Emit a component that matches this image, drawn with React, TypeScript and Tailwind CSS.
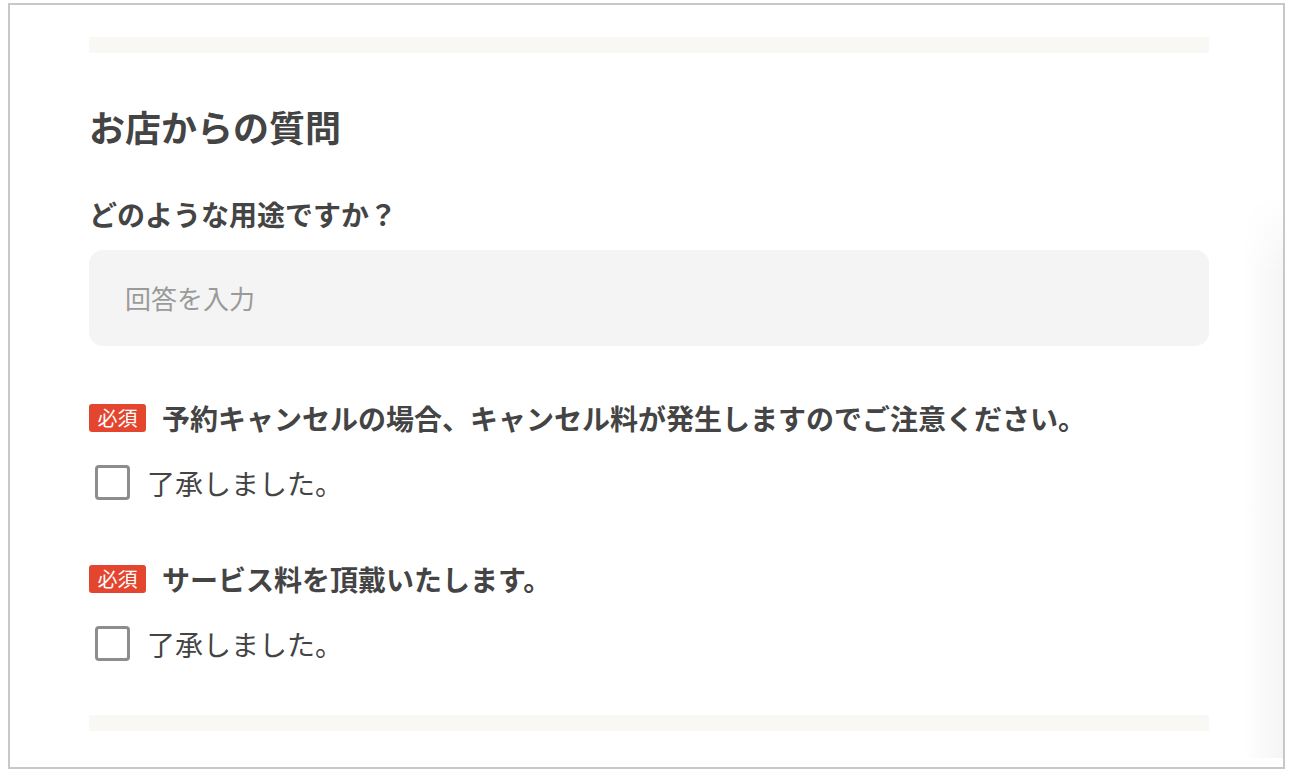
import React from "react";

const font = { fontFamily: '"Noto Sans CJK JP", "Noto Sans", sans-serif' };

function Required({ text, mt }: { text: string; mt: string }) {
  return (
    <div className={`flex items-center h-[28px] gap-[16px] ${mt}`}>
      <span className="flex items-center justify-center h-[28px] w-[57px] rounded-[3px] bg-[#e4452f] text-white text-[20px] leading-none">
        必須
      </span>
      <span className="text-[28px] font-bold leading-none text-[#444444]">{text}</span>
    </div>
  );
}

function Check({ mt }: { mt: string }) {
  return (
    <label className={`flex items-center h-[35px] gap-[17px] ml-[6px] ${mt}`}>
      <span className="block w-[35px] h-[35px] rounded-[4px] border-[3px] border-[#8d8d8d] bg-white" />
      <span className="text-[28px] leading-none text-[#444444]">了承しました。</span>
    </label>
  );
}

export default function App() {
  return (
    <div className="w-[1292px] h-[771px] bg-white overflow-hidden" style={font}>
      <div className="relative ml-[8px] mt-[3px] w-[1277px] h-[766px] border-2 border-[#c8c8c8] bg-white overflow-hidden">
        <div className="pointer-events-none absolute right-0 top-[190px] bottom-[9px] w-[40px] bg-gradient-to-r from-white to-[#f5f5f5] [mask-image:linear-gradient(to_bottom,transparent,black_80px)]" />
        <div className="relative ml-[79px] w-[1120px] flex flex-col">
          <div className="mt-[32px] h-[16px] bg-[#f9f8f4]" />
          <h2 className="mt-[55px] h-[36px] text-[36px] leading-[36px] font-bold text-[#444444]">お店からの質問</h2>
          <p className="mt-[56px] h-[28px] text-[28px] leading-[28px] font-bold text-[#444444]">どのような用途ですか？</p>
          <div className="mt-[22px] h-[96px] rounded-[14px] bg-[#f4f4f4] flex items-center pl-[36px]">
            <span className="text-[26px] leading-none text-[#9a9a9a]">回答を入力</span>
          </div>
          <Required mt="mt-[58px]" text="予約キャンセルの場合、キャンセル料が発生しますのでご注意ください。" />
          <Check mt="mt-[33px]" />
          <Required mt="mt-[65px]" text="サービス料を頂戴いたします。" />
          <Check mt="mt-[33px]" />
          <div className="mt-[54px] h-[16px] bg-[#f9f8f4]" />
        </div>
      </div>
    </div>
  );
}
